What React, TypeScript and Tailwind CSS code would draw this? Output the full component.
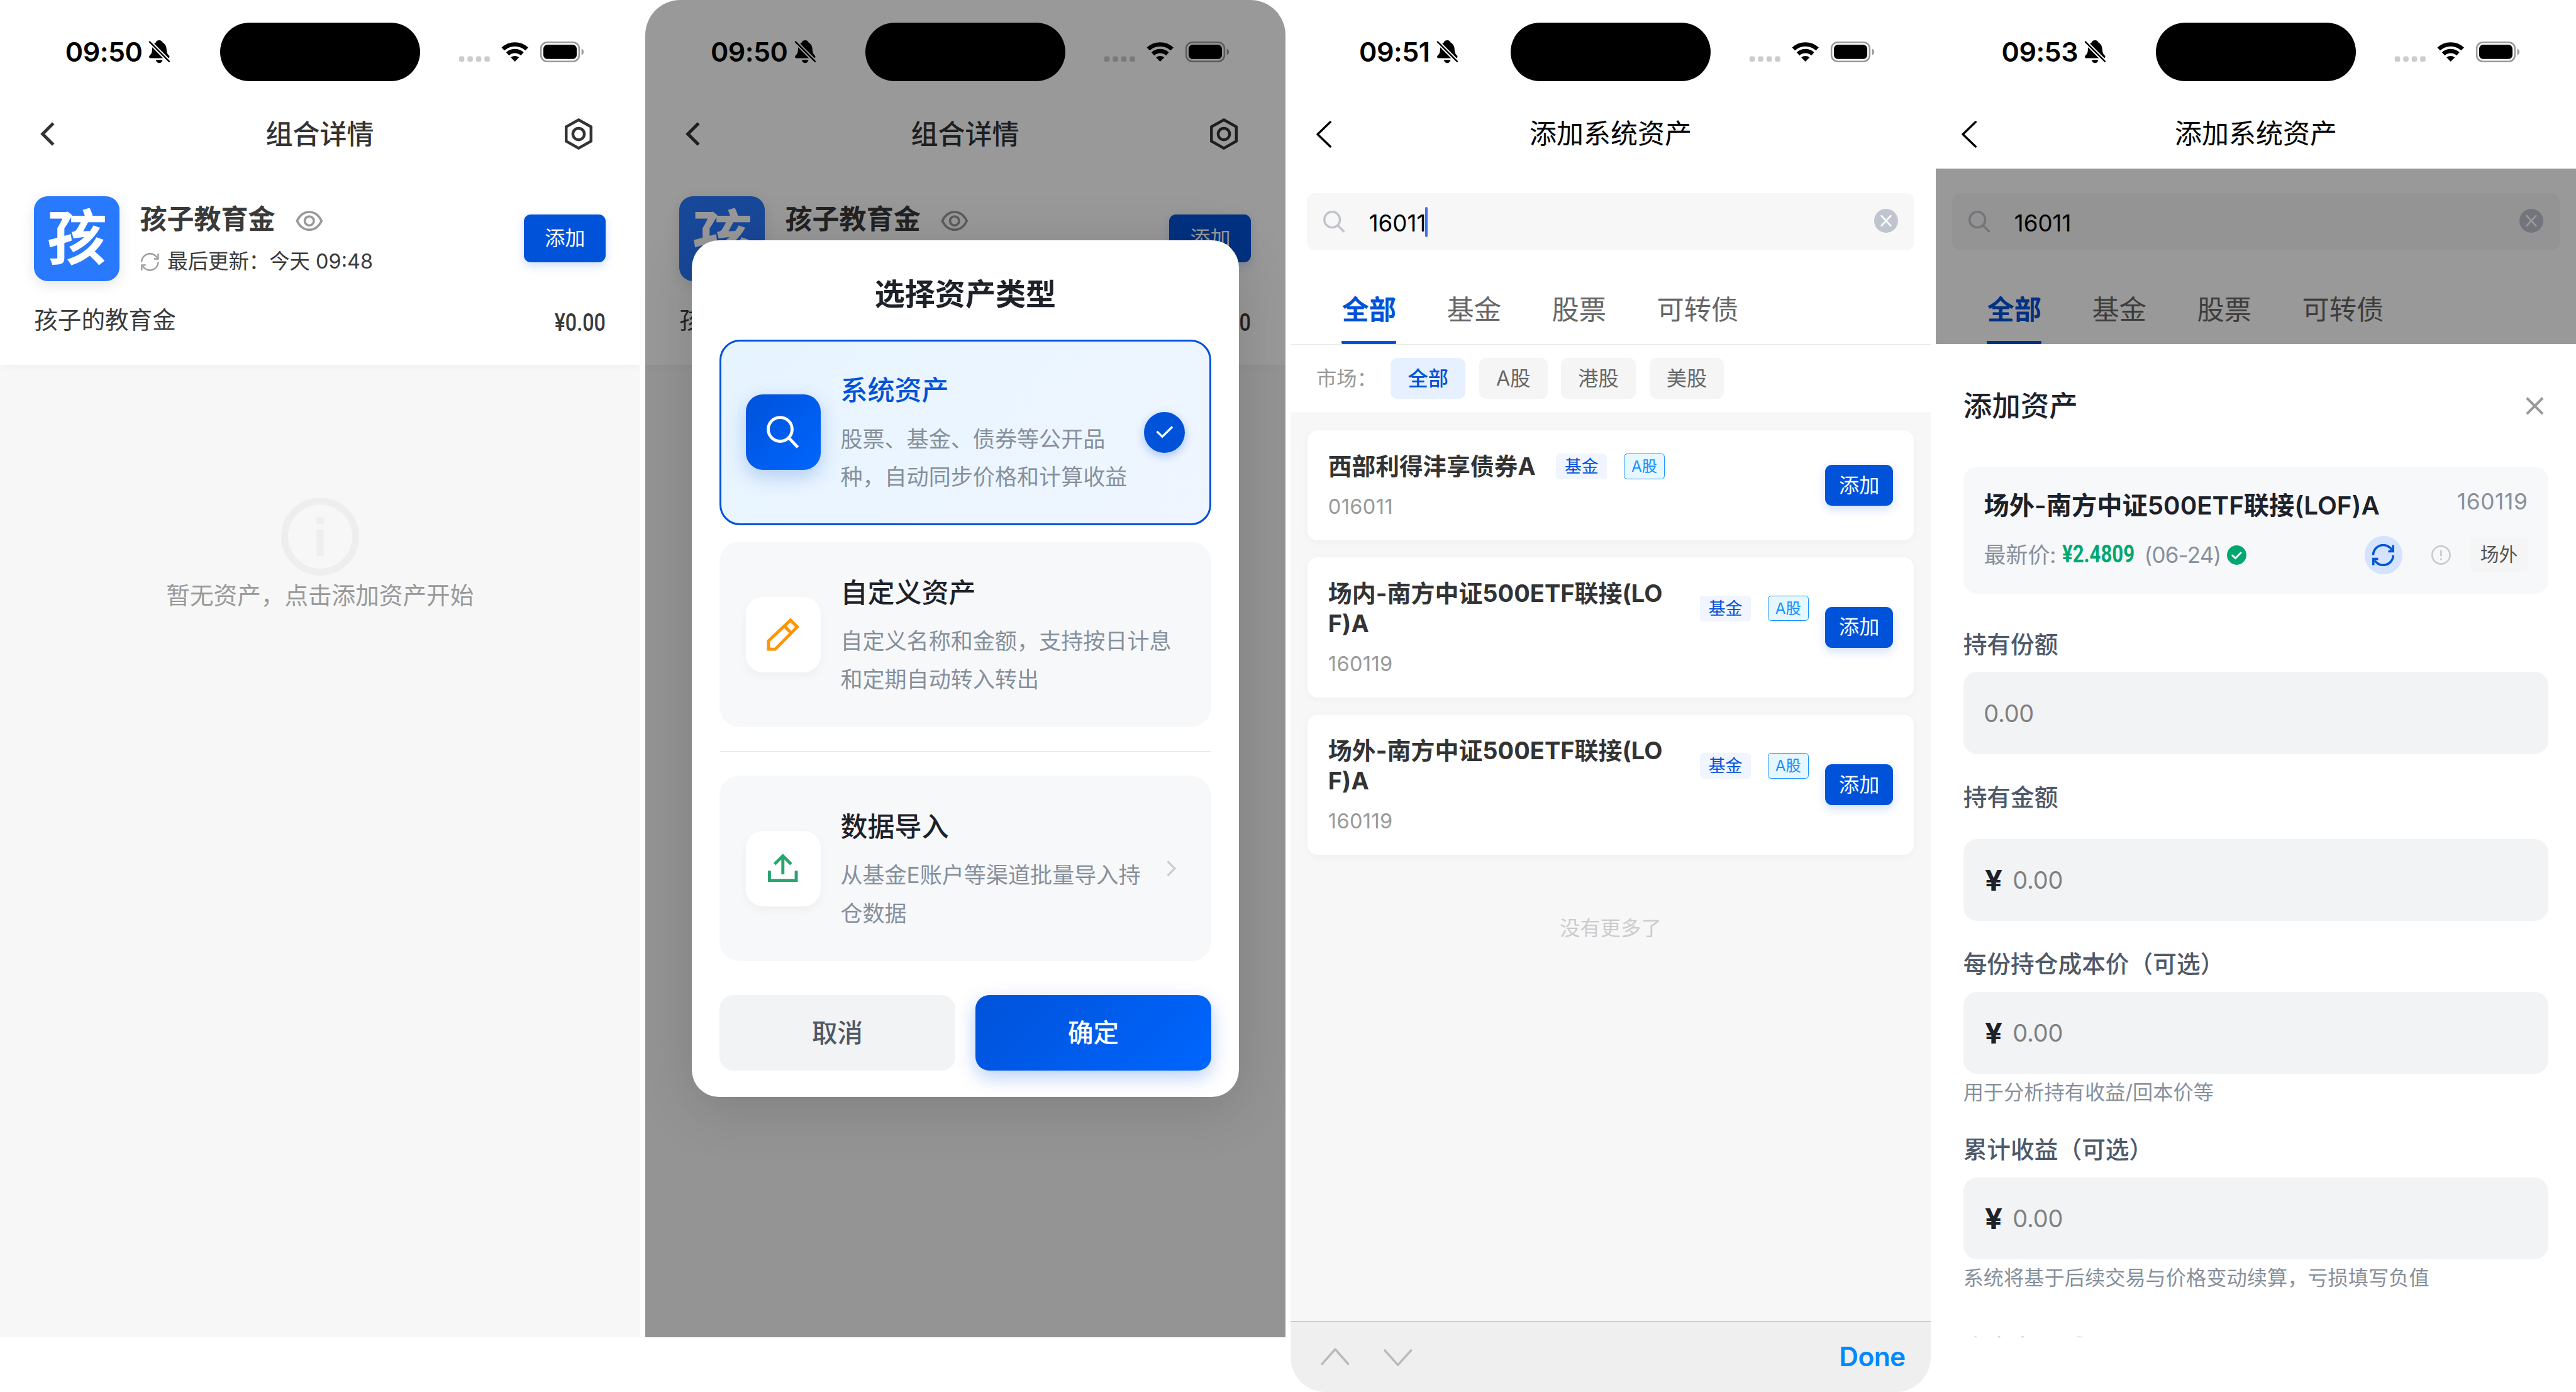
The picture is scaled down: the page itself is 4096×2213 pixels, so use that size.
import React from "react";

interface Asset {
  id: number;
  name: string;
  code: string;
  long?: boolean;
}

const assets: Asset[] = [
  { id: 1, name: "西部利得沣享债券A", code: "016011" },
  { id: 2, name: "场内-南方中证500ETF联接(LOF)A", code: "160119", long: true },
  { id: 3, name: "场外-南方中证500ETF联接(LOF)A", code: "160119", long: true },
];

const tabs = ["全部", "基金", "股票", "可转债"];
const markets = ["全部", "A股", "港股", "美股"];

/* ---------- icons ---------- */

function BellOffIcon() {
  return (
    <svg className="w-[13px] h-[14.3px] ml-[4.4px] overflow-visible" viewBox="0 0 13 14.3">
      <path d="M6.4 0C7.6 0 8.3.6 8.6 1.5 10.2 2.3 10.9 3.9 11 5.8 11.1 8 11.8 8.9 12.6 9.7 13.1 10.3 12.8 11.3 12 11.3H.9C0 11.3-.2 10.2.3 9.7 1.3 8.7 1.9 8 1.9 5.8 2 3.9 2.6 2.3 4.2 1.5 4.5.6 5.2 0 6.4 0Z" />
      <path d="M4.3 12.3h4.2c-.3 1.3-1.1 2-2.1 2s-1.8-.7-2.1-2Z" />
      <path d="M.2.8 12.9 13.6" stroke="#fff" strokeWidth="2.5" />
      <path d="M.4 1 12.6 13.3" stroke="#000" strokeWidth="0.95" strokeLinecap="round" />
    </svg>
  );
}

function StatusIcons() {
  return (
    <svg className="w-[80px] h-[13px] ml-[24.3px]" viewBox="288 26 80 13">
      {[0, 1, 2, 3].map((i) => (
        <rect key={i} x={288.33 + i * 5.33} y="35.33" width="3.33" height="3.33" rx="1" fill="#ccc" />
      ))}
      <g transform="translate(323.45 38.6)" fill="none" stroke="#000">
        <path d="M-7.5-7.9A11 11 0 0 1 7.5-7.9" strokeWidth="2.6" />
        <path d="M-4.6-4.8A6.7 6.7 0 0 1 4.6-4.8" strokeWidth="2.6" />
        <path d="M0 0-2.6-2.6A4 4 0 0 1 2.6-2.6Z" fill="#000" stroke="none" />
      </g>
      <rect x="339.8" y="26.5" width="24" height="12" rx="3.9" fill="none" stroke="#999" />
      <rect x="341.3" y="28" width="21" height="9" rx="2.6" />
      <path d="M365.3 30.5c1.8.7 1.8 3.3 0 4Z" fill="#999" />
    </svg>
  );
}

function SyncIcon({ className, stroke = 8 }: { className: string; stroke?: number }) {
  return (
    <svg className={className} viewBox="0 0 100 100" fill="none" stroke="currentColor" strokeWidth={stroke}>
      <path d="M4 50A46 46 0 0 1 89 26" />
      <path d="M95 4V33H73" />
      <path d="M96 50A46 46 0 0 1 11 74" />
      <path d="M5 96V67H27" />
    </svg>
  );
}

function EyeIcon() {
  return (
    <svg className="w-[17.2px] h-[12.8px] text-[#999]" viewBox="0 0 17.2 12.8" fill="none" stroke="currentColor" strokeWidth="1.45">
      <path d="M.9 6.4C2.6 2.9 5.4.8 8.6.8S14.6 2.9 16.3 6.4C14.6 9.9 11.8 12 8.6 12S2.6 9.9.9 6.4Z" />
      <circle cx="8.6" cy="6.4" r="2.85" />
    </svg>
  );
}

function BackIcon({ thin }: { thin?: boolean }) {
  if (thin) {
    return (
      <svg className="w-[9.6px] h-[17px] mt-[1px]" viewBox="0 0 9.6 17" fill="none" stroke="#000" strokeWidth="1.35" strokeLinecap="round" strokeLinejoin="round">
        <path d="M8.8.8.8 8.5 8.8 16.2" />
      </svg>
    );
  }
  return (
    <svg className="w-[9px] h-[15px]" viewBox="0 0 9 15" fill="none" stroke="#333" strokeWidth="2">
      <path d="M8.2.8 1.5 7.5 8.2 14.2" />
    </svg>
  );
}

function HexIcon() {
  return (
    <svg className="w-[17.4px] h-[19.8px]" viewBox="0 0 17.4 19.8" fill="none" stroke="#333" strokeWidth="1.75">
      <path d="M8.7 1 16.5 5.4V14.4L8.7 18.8.9 14.4V5.4Z" />
      <circle cx="8.7" cy="9.9" r="3.6" />
    </svg>
  );
}

/* ---------- shared pieces ---------- */

function StatusBar({ time }: { time: string }) {
  return (
    <div className="flex items-center h-[62px] pt-[3px] shrink-0">
      <div className="flex items-center justify-center w-[138.3px] pl-[9.5px] shrink-0">
        <span className="text-[17px] leading-[20px] pt-[.3px] font-semibold tracking-[-0.2px] text-black">{time}</span>
        <BellOffIcon />
      </div>
      <div className="w-[125.4px] h-[36.8px] rounded-full bg-black shrink-0" />
      <StatusIcons />
    </div>
  );
}

function AddButton({ small }: { small?: boolean }) {
  return (
    <button
      className={`flex items-center justify-center shrink-0 rounded-[4.3px] bg-[#0052d9] text-white text-[12.7px] leading-none shadow-[0_2px_6px_rgba(0,82,217,0.18)] ${
        small ? "w-[42.7px] h-[25.7px]" : "w-[51.4px] h-[30px]"
      }`}
    >
      添加
    </button>
  );
}

function DetailPage({ empty }: { empty?: boolean }) {
  return (
    <div className="flex flex-col h-[840px] bg-white">
      <StatusBar time="09:50" />
      <div className="flex items-center justify-between h-[44px] pl-[25.2px] pr-[29.9px] shrink-0">
        <BackIcon />
        <h1 className="pl-[12.8px] pt-[.5px] text-[17px] leading-none font-medium text-[#333]">组合详情</h1>
        <HexIcon />
      </div>
      <div className="relative h-[123px] px-[21.44px] pt-[17.1px] shrink-0 bg-white shadow-[0_3px_5px_-2px_rgba(0,0,0,0.04)]">
        <div className="flex items-center h-[53.6px]">
          <div className="flex items-center justify-center w-[53.6px] h-[53.6px] rounded-[8.6px] bg-[#2979ff] text-white text-[37.5px] leading-none font-bold shadow-[0_2px_9px_rgba(0,0,0,0.1)]">
            孩
          </div>
          <div className="flex-1 pl-[12.86px] pt-[3.2px]">
            <div className="flex items-center h-[26px]">
              <span className="text-[17px] leading-[26px] font-bold text-[#3a3a3a]">孩子教育金</span>
              <div className="pl-[12.7px] pt-[1.4px]">
                <EyeIcon />
              </div>
            </div>
            <div className="flex items-center h-[27px] text-[12.8px] text-[#3a3a3a]">
              <SyncIcon className="w-[11.4px] h-[11.4px] ml-[.5px] text-[#999]" />
              <span className="pl-[5.4px]">最后更新：今天 09:48</span>
            </div>
          </div>
          <AddButton />
        </div>
        <div className="flex items-center justify-between h-[47px] pt-[1.2px] text-[#3a3a3a]">
          <span className="text-[14.85px] leading-none">孩子的教育金</span>
          <span className="inline-block font-[Roboto] font-medium text-[15.4px] leading-none pt-[4px] origin-right scale-x-[0.83]">¥0.00</span>
        </div>
      </div>
      <div className="flex flex-col items-center flex-1 pt-[83.3px] bg-[#f7f7f7]">
        {empty && (
          <>
            <svg className="w-[49px] h-[49px]" viewBox="0 0 49 49" fill="none" stroke="#eee" strokeWidth="4.4">
              <circle cx="24.5" cy="24.5" r="22.3" />
              <path d="M24.5 12.3v4.5M24.5 20v16.8" />
            </svg>
            <p className="pt-[2px] text-[14.86px] leading-[21px] text-[#999]">暂无资产，点击添加资产开始</p>
          </>
        )}
      </div>
    </div>
  );
}

/* ---------- asset type dialog ---------- */

interface OptionProps {
  title: string;
  desc: string;
  active?: boolean;
  icon: React.ReactNode;
  extra?: React.ReactNode;
}

function TypeOption({ title, desc, active, icon, extra }: OptionProps) {
  return (
    <div
      className={`flex items-center h-[116.5px] rounded-[12.86px] border-[1.3px] px-[15.2px] ${
        active ? "border-[#0052d9] bg-linear-135 from-[#e6f4ff] to-[#f0f6ff]" : "border-transparent bg-[#f7f8fa]"
      }`}
    >
      <div
        className={`flex items-center justify-center w-[47.2px] h-[47.2px] rounded-[10.7px] shrink-0 ${
          active
            ? "bg-linear-135 from-[#0052d9] to-[#0066ff] shadow-[0_4px_12px_rgba(0,82,217,0.25)]"
            : "bg-white shadow-[0_2px_6px_rgba(0,0,0,0.04)]"
        }`}
      >
        {icon}
      </div>
      <div className="flex-1 pl-[12.4px] pt-[.4px]">
        <h3 className={`text-[17px] leading-[27.5px] font-medium ${active ? "text-[#0052d9]" : "text-[#1d2129]"}`}>{title}</h3>
        <p className="pt-[4.6px] text-[13.86px] leading-[24px] text-[#86909c]">{desc}</p>
      </div>
      {extra}
    </div>
  );
}

function TypeDialog() {
  return (
    <div className="w-[343.4px] h-[538px] rounded-[17.15px] bg-white px-[17.3px] shadow-[0_6px_36px_rgba(0,0,0,0.15)]">
      <h2 className="h-[62.2px] pt-[20.6px] text-center text-[19px] leading-[27px] font-semibold text-[#1d2129]">选择资产类型</h2>
      <TypeOption
        active
        title="系统资产"
        desc="股票、基金、债券等公开品种，自动同步价格和计算收益"
        icon={
          <svg className="w-[20.4px] h-[20.6px]" viewBox="0 0 20.4 20.6" fill="none" stroke="#fff" strokeWidth="1.9">
            <circle cx="8.5" cy="8.5" r="7.5" />
            <path d="M13.7 13.7 19.6 19.8" />
          </svg>
        }
        extra={
          <div className="flex items-center justify-center w-[25.7px] h-[25.7px] ml-[8.6px] rounded-full bg-[#0052d9] shrink-0 shadow-[0_2px_6px_rgba(0,82,217,0.3)]">
            <svg className="w-[11px] h-[8px]" viewBox="0 0 11 8" fill="none" stroke="#fff" strokeWidth="1.35">
              <path d="M.6 3.5 4 6.8 10.3.6" />
            </svg>
          </div>
        }
      />
      <div className="h-[10.6px]" />
      <TypeOption
        title="自定义资产"
        desc="自定义名称和金额，支持按日计息和定期自动转入转出"
        icon={
          <svg className="w-[20.6px] h-[21px]" viewBox="0 0 20.6 21" fill="none" stroke="#ff9500" strokeWidth="1.95">
            <path d="M1.15 19.8V14.6L15 1.6 19.2 5.8 5.4 19.8Z" />
            <path d="M11.1 5.3 15.4 9.6" />
          </svg>
        }
      />
      <div className="my-[15px] h-[0.4px] bg-[#e5e6eb]" />
      <TypeOption
        title="数据导入"
        desc="从基金E账户等渠道批量导入持仓数据"
        icon={
          <svg className="w-[18.8px] h-[18px] mb-[1px]" viewBox="0 0 18.8 18" fill="none" stroke="#2ba471" strokeWidth="1.95">
            <path d="M.95 10.8V16.9H17.8V10.8" />
            <path d="M9.4 13V1.6M4.2 6.6 9.4 1.5 14.6 6.6" />
          </svg>
        }
        extra={
          <svg className="w-[6px] h-[10px] ml-[6px] mr-[5.6px] shrink-0" viewBox="0 0 6 10" fill="none" stroke="#c9cdd4" strokeWidth="1.3">
            <path d="M.6.5 5.1 5 .6 9.5" />
          </svg>
        }
      />
      <div className="flex gap-[12.7px] pt-[21.4px]">
        <button className="flex-1 h-[47.2px] pt-[.8px] rounded-[8.6px] bg-[#f2f3f5] text-[16px] leading-none font-medium text-[#4e5969]">取消</button>
        <button className="flex-1 h-[47.2px] pt-[.8px] rounded-[8.6px] bg-linear-135 from-[#0052d9] to-[#0066ff] text-[16px] leading-none font-medium text-white shadow-[0_4px_12px_rgba(0,82,217,0.28)]">
          确定
        </button>
      </div>
    </div>
  );
}

/* ---------- search page ---------- */

function SearchHeader({ time }: { time: string }) {
  return (
    <>
      <StatusBar time={time} />
      <div className="flex items-center justify-between h-[44px] px-[16px] shrink-0">
        <BackIcon thin />
        <h1 className="text-[17px] leading-none text-black">添加系统资产</h1>
        <span className="w-[9.6px]" />
      </div>
    </>
  );
}

function SearchArea({ caret }: { caret?: boolean }) {
  return (
    <>
      <div className="px-[10.2px] pt-[15.3px]">
        <div className="flex items-center h-[36px] px-[10.2px] rounded-[5px] bg-[#f7f7f7]">
          <svg className="w-[13.6px] h-[13.6px] shrink-0" viewBox="0 0 13.6 13.6" fill="none" stroke="#c0c4cc" strokeWidth="1.4" strokeLinecap="round">
            <circle cx="5.6" cy="5.6" r="4.9" />
            <path d="M9.2 9.3 12.8 12.9" />
          </svg>
          <span className="pl-[15.2px] pt-[2px] text-[14.5px] leading-none text-black">16011</span>
          {caret && <span className="w-[1.8px] h-[19px] -ml-[.6px] rounded-full bg-[#446ff0]" />}
          <svg className="w-[15px] h-[15px] ml-auto mb-[1.6px]" viewBox="0 0 15 15">
            <circle cx="7.5" cy="7.5" r="7.5" fill="#bfc4cf" />
            <path d="M4.6 4.4 10.4 10.6M10.4 4.4 4.6 10.6" stroke="#fff" strokeWidth="1.1" strokeLinecap="round" />
          </svg>
        </div>
      </div>
      <div className="flex gap-[31.8px] h-[59.2px] px-[32.1px] border-b-[0.4px] border-[#e8e8e8]">
        {tabs.map((tab, i) => (
          <div
            key={tab}
            className={`flex items-center h-full pt-[17.5px] text-[17.1px] leading-none border-b-[2.2px] ${
              i === 0 ? "border-[#0052d9] rounded-b-[1px] font-bold text-[#0052d9]" : "border-transparent text-[#666]"
            }`}
          >
            {tab}
          </div>
        ))}
      </div>
    </>
  );
}

function AssetCard({ asset }: { asset: Asset }) {
  return (
    <div className="flex items-center p-[12.86px] rounded-[6.4px] bg-white shadow-[0_1px_5px_rgba(0,0,0,0.04)]">
      <div className="flex-1 min-w-0">
        <div className="flex items-center">
          <div className={`leading-[19.2px] font-bold text-[#333] break-all ${asset.long ? "w-[220.7px] pr-[6px] text-[15px]" : "text-[14.9px]"}`}>{asset.name}</div>
          <span className="ml-[12.8px] w-[32.2px] h-[16.2px] flex items-center justify-center rounded-[2.1px] bg-[#f0f5ff] text-[10.6px] leading-none text-[#0052d9] shrink-0">基金</span>
          <span className="ml-[10.5px] w-[25.6px] h-[16px] flex items-center justify-center rounded-[2.1px] border-[0.5px] border-[#1890ff] bg-[#e6f7ff] text-[9.6px] leading-none text-[#1890ff] shrink-0">A股</span>
        </div>
        <div className="pt-[7.2px] text-[12.86px] leading-[16.8px] tracking-[0.15px] text-[#999]">{asset.code}</div>
      </div>
      <AddButton small />
    </div>
  );
}

function SearchPage() {
  return (
    <div className="flex flex-col w-[402px] h-[874px] rounded-b-[22px] overflow-hidden bg-white">
      <SearchHeader time="09:51" />
      <SearchArea caret />
      <div className="flex items-center gap-[8.58px] h-[43px] pl-[16.1px] border-b-[0.4px] border-[#e8e8e8] text-[12.75px] leading-none shrink-0">
        <span className="text-[#999]">市场：</span>
        {markets.map((m, i) => (
          <span
            key={m}
            className={`flex items-center h-[25.7px] px-[10.7px] rounded-[4.3px] ${
              i === 0 ? "bg-[#e6f0ff] font-medium text-[#0052d9]" : "bg-[#f5f5f5] text-[#666]"
            }`}
          >
            {m}
          </span>
        ))}
      </div>
      <div className="flex-1 bg-[#f7f7f7] px-[10.7px] pt-[10.9px]">
        <div className="flex flex-col gap-[10.7px]">
          {assets.map((asset) => (
            <AssetCard key={asset.id} asset={asset} />
          ))}
        </div>
        <p className="pt-[36.4px] text-center text-[12.75px] leading-[20px] text-[#ccc]">没有更多了</p>
      </div>
      <div className="flex items-center justify-between h-[44px] pl-[18.8px] pr-[15.9px] border-t-[0.6px] border-[#909090] bg-[#efefef] shrink-0">
        <svg className="w-[58px] h-[12px]" viewBox="0 0 58 12" fill="none" stroke="#bababc" strokeWidth="1.4" strokeLinecap="round" strokeLinejoin="round">
          <path d="M.9 10.4 9.1 1.2 17.2 10.4" />
          <path d="M40.3 1.9 48.5 11.1 56.8 1.9" />
        </svg>
        <span className="text-[16.8px] leading-none font-semibold tracking-[-0.25px] text-[#0088ff]">Done</span>
      </div>
    </div>
  );
}

/* ---------- add asset form ---------- */

function Label({ children }: { children: React.ReactNode }) {
  return <div className="text-[14.9px] leading-[21px] font-medium text-[#4e5969]">{children}</div>;
}

function AmountInput({ prefix, className = "" }: { prefix?: boolean; className?: string }) {
  return (
    <div className={`flex items-center h-[51.4px] px-[12.86px] rounded-[8.6px] bg-[#f2f3f5] ${className}`}>
      {prefix && (
        <span className="w-[18.2px] pl-[.6px] pt-[.6px] text-[18px] leading-none font-bold text-[#1d2129]">
          <span className="inline-block origin-left scale-x-[1.08]">¥</span>
        </span>
      )}
      <span className="pt-[.8px] text-[15px] leading-none tracking-[-0.1px] text-[#808080]">0.00</span>
    </div>
  );
}

function AddForm() {
  return (
    <div className="px-[17.15px] h-[624px] overflow-hidden bg-white">
      <div className="flex items-center justify-between pt-[26.2px] pr-[3px]">
        <h2 className="text-[18px] leading-[26px] font-medium text-[#1d2129]">添加资产</h2>
        <svg className="w-[11.4px] h-[11.4px] mb-[.8px]" viewBox="0 0 11.4 11.4" fill="none" stroke="#999" strokeWidth="1.6">
          <path d="M.7.7 10.7 10.7M10.7.7.7 10.7" />
        </svg>
      </div>
      <div className="h-[79.8px] mt-[25.1px] px-[13px] pt-[12.6px] rounded-[8.6px] bg-[#f7f8fa]">
        <div className="flex justify-between">
          <span className="text-[15.9px] leading-[24px] font-semibold text-[#1d2129]">场外-南方中证500ETF联接(LOF)A</span>
          <span className="text-[13.94px] leading-[19px] tracking-[0.25px] text-[#86909c]">160119</span>
        </div>
        <div className="flex items-center h-[24px] mt-[6.7px] text-[13.8px] leading-none text-[#86909c]">
          <span className="w-[49.3px]">最新价:</span>
          <span className="w-[51.4px] whitespace-nowrap">
            <span className="inline-block font-[Roboto] font-bold text-[15px] leading-none text-[#00a870] origin-left scale-x-[0.82]">¥2.4809</span>
          </span>
          <span className="w-[46.2px] tracking-[-0.3px] whitespace-nowrap">(06-24)</span>
          <svg className="w-[12.2px] h-[12.2px] ml-[5.8px]" viewBox="0 0 12 12">
            <circle cx="6" cy="6" r="6" fill="#00a870" />
            <path d="M3.1 5.9 5.2 8 8.9 4.3" fill="none" stroke="#fff" strokeWidth="1.1" />
          </svg>
          <div className="flex items-center justify-center w-[23.8px] h-[23.8px] ml-auto rounded-full bg-[#d4e3ff] text-[#0052d9]">
            <SyncIcon className="w-[13.8px] h-[13.8px]" stroke={10} />
          </div>
          <svg className="w-[12.2px] h-[12.2px] ml-[18.2px]" viewBox="0 0 12 12" fill="none" stroke="#c8c9cc" strokeWidth="1">
            <circle cx="6" cy="6" r="5.5" />
            <path d="M6 3v3.8M6 7.9v1.1" />
          </svg>
          <span className="flex items-center justify-center w-[36.3px] h-[21.6px] ml-[12.2px] rounded-[3.2px] bg-[#f5f5f5] text-[11.8px] text-[#555]">场外</span>
        </div>
      </div>
      <div className="pt-[21.1px]">
        <Label>持有份额</Label>
        <AmountInput className="mt-[6.9px]" />
      </div>
      <div className="pt-[16.7px]">
        <Label>持有金额</Label>
        <AmountInput prefix className="mt-[15.9px]" />
      </div>
      <div className="pt-[16.5px]">
        <Label>每份持仓成本价（可选）</Label>
        <AmountInput prefix className="mt-[7.1px]" />
        <p className="pt-[2.8px] text-[12.73px] leading-[18px] text-[#86909c]">用于分析持有收益/回本价等</p>
      </div>
      <div className="pt-[16.2px]">
        <Label>累计收益（可选）</Label>
        <AmountInput prefix className="mt-[6.9px]" />
        <p className="pt-[2.8px] text-[12.73px] leading-[18px] text-[#86909c]">系统将基于后续交易与价格变动续算，亏损填写负值</p>
      </div>
      {/* next row starts just under the fold */}
      <div className="flex items-center pt-[24.7px]">
        <Label>资金来源</Label>
        <svg className="w-[13px] h-[13px] ml-[6.8px] mb-[1.2px]" viewBox="0 0 13 13" fill="none" stroke="#999">
          <circle cx="6.5" cy="6.5" r="6" />
        </svg>
      </div>
    </div>
  );
}

export default function App() {
  return (
    <div className="[zoom:2.53152] flex items-start gap-[3.33px] w-[1618px] h-[874.1px] overflow-hidden bg-white antialiased [font-family:Inter,'Noto_Sans_CJK_SC',sans-serif]">
      {/* portfolio detail */}
      <div className="w-[402px] shrink-0">
        <DetailPage empty />
      </div>

      {/* asset type picker over the detail page */}
      <div className="relative w-[402px] h-[840px] rounded-t-[22px] overflow-hidden shrink-0">
        <DetailPage />
        <div className="absolute inset-0 flex items-center justify-center bg-black/40">
          <TypeDialog />
        </div>
      </div>

      {/* system asset search */}
      <div className="w-[402px] shrink-0">
        <SearchPage />
      </div>

      {/* add asset sheet */}
      <div className="w-[402px] h-[840px] overflow-hidden shrink-0">
        <SearchHeader time="09:53" />
        <div className="relative h-[110px] overflow-hidden">
          <SearchArea />
          <div className="absolute inset-0 bg-black/40" />
        </div>
        <AddForm />
      </div>
    </div>
  );
}
